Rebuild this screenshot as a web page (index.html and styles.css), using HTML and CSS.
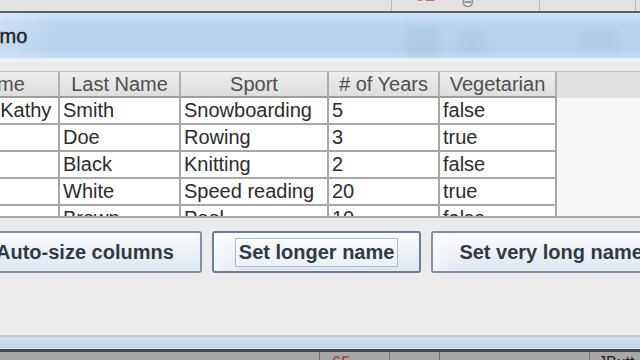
FILE: index.html
```html
<!DOCTYPE html>
<html lang="en">
<head>
    <meta charset="UTF-8">
    <meta name="viewport" content="width=device-width, initial-scale=1.0">
    <title>Table Column Demo</title>
    <link rel="stylesheet" href="styles.css">
</head>
<body>
    <!-- desktop strip above the window -->
    <div class="desk-top">
        <div class="desk-cell wide"></div>
        <div class="desk-cell mid">
            <span class="red-num">52</span>
            <span class="minus-glyph">&#8854;</span>
        </div>
        <div class="desk-cell small"></div>
        <div class="desk-cell rest"></div>
    </div>

    <div class="window">
        <div class="titlebar">
            <span class="title">Demo</span>
            <!-- blurred window controls -->
            <span class="ghost ghost-a"></span>
            <span class="ghost ghost-b"></span>
            <span class="ghost ghost-c"></span>
        </div>

        <div class="content">
            <div class="scroll-pane">
                <table class="grid">
                    <colgroup>
                        <col class="c-first">
                        <col class="c-last">
                        <col class="c-sport">
                        <col class="c-years">
                        <col class="c-veg">
                    </colgroup>
                    <thead>
                        <tr>
                            <th>First Name</th>
                            <th>Last Name</th>
                            <th>Sport</th>
                            <th># of Years</th>
                            <th>Vegetarian</th>
                        </tr>
                    </thead>
                    <tbody>
                        <tr><td>Katherine Kathy</td><td>Smith</td><td>Snowboarding</td><td>5</td><td>false</td></tr>
                        <tr><td>John</td><td>Doe</td><td>Rowing</td><td>3</td><td>true</td></tr>
                        <tr><td>Sue</td><td>Black</td><td>Knitting</td><td>2</td><td>false</td></tr>
                        <tr><td>Jane</td><td>White</td><td>Speed reading</td><td>20</td><td>true</td></tr>
                        <tr><td>Joe</td><td>Brown</td><td>Pool</td><td>10</td><td>false</td></tr>
                    </tbody>
                </table>
            </div>

            <div class="buttons">
                <button type="button" class="btn">Auto-size columns</button>
                <button type="button" class="btn btn-focus"><span class="focus-ring">Set longer name</span></button>
                <button type="button" class="btn">Set very long name</button>
            </div>
        </div>

        <div class="frame-bottom"></div>
    </div>

    <!-- desktop strip below the window -->
    <div class="desk-bottom">
        <div class="desk-cell b1"></div>
        <div class="desk-cell b2"><span class="red-num low">65</span></div>
        <div class="desk-cell b3"></div>
        <div class="desk-cell b4"></div>
        <div class="desk-cell b5"><span class="dark-text">JButt</span></div>
    </div>
</body>
</html>
```

FILE: styles.css
```css
body {
    margin: 0;
    width: 640px;
    height: 360px;
    overflow: hidden;
    background-color: #e4e4e4;
    font-family: "Liberation Sans", Arial, sans-serif;
}

/* desktop strips */
.desk-top {
    display: flex;
    height: 11px;
    overflow: hidden;
    background-color: #e3e3e3;
}
.desk-cell {
    height: 100%;
    overflow: hidden;
    box-sizing: border-box;
    border-right: 1px solid #b9b9b9;
    white-space: nowrap;
}
.desk-top .wide { width: 392px; }
.desk-top .mid { width: 148px; }
.desk-top .small { width: 96px; }
.desk-top .rest { flex: 1; border-right: none; }

.red-num {
    display: inline-block;
    margin-left: 23px;
    margin-top: -15px;
    font-size: 18px;
    line-height: 20px;
    font-weight: bold;
    color: #b0403a;
    opacity: 0.7;
    vertical-align: top;
}
.minus-glyph {
    display: inline-block;
    margin-left: 22px;
    margin-top: -7px;
    font-size: 16px;
    line-height: 18px;
    color: #8a8a8a;
    vertical-align: top;
}

/* window */
.window {
    border-bottom: 3px solid #4a4a4a;
}
.titlebar {
    position: relative;
    height: 45px;
    border-top: 2px solid #5a5f66;
    border-bottom: 2px solid #e4eef8;
    background:
        linear-gradient(to right, rgba(255, 255, 255, 0.22) 0, rgba(255, 255, 255, 0) 60px),
        linear-gradient(to bottom, #cfe3f7 0, #bcd6f1 20%, #b6d2ef 80%, #c4dbf2 100%);
    display: flex;
    align-items: center;
    overflow: hidden;
}
.title {
    margin-left: -26px;
    margin-top: 2px;
    font-size: 20px;
    color: #1c1f24;
    -webkit-text-stroke: 0.4px #1c1f24;
}
.ghost {
    position: absolute;
    filter: blur(4px);
    background-color: rgba(60, 85, 120, 0.08);
}
.ghost-a { left: 407px; top: 14px; width: 32px; height: 30px; }
.ghost-b { left: 458px; top: 16px; width: 28px; height: 24px; background-color: rgba(60, 85, 120, 0.06); }
.ghost-c { left: 582px; top: 16px; width: 34px; height: 20px; background-color: rgba(60, 85, 120, 0.07); }

.content {
    height: 275px;
    box-sizing: border-box;
    padding-top: 10px;
    background-color: #ececec;
    border-top: 1px solid #f6f6f6;
}

/* table in a scroll pane */
.scroll-pane {
    margin-left: -94px;
    height: 147px;
    box-sizing: border-box;
    overflow: hidden;
    border-top: 1px solid #bcbcbc;
    border-bottom: 2px solid #a9a9a9;
    background: linear-gradient(to bottom, #e1e1e1 0, #e1e1e1 26px, #f8f8f8 26px);
}
.grid {
    table-layout: fixed;
    width: 651px;
    border-collapse: separate;
    border-spacing: 0;
    font-size: 20px;
    background-color: #ffffff;
}
.c-first { width: 154px; }
.c-last { width: 121px; }
.c-sport { width: 148px; }
.c-years { width: 111px; }
.c-veg { width: 117px; }

.grid th {
    height: 24px;
    padding: 0 2px;
    font-weight: normal;
    line-height: 24px;
    color: #4f4f4f;
    text-align: center;
    white-space: nowrap;
    overflow: hidden;
    background: linear-gradient(to bottom, #ededed, #dedede);
    border-right: 2px solid #aeaeae;
    border-bottom: 2px solid #9d9d9d;
}
.grid th:first-child {
    padding-right: 14px;
}
.grid td {
    height: 25px;
    padding: 0 3px;
    line-height: 25px;
    color: #2c2c2c;
    white-space: nowrap;
    overflow: hidden;
    border-right: 2px solid #a7a7a7;
    border-bottom: 2px solid #a7a7a7;
}

/* buttons */
.buttons {
    display: flex;
    gap: 10px;
    margin-top: 13px;
    margin-left: -32px;
}
.btn {
    flex: none;
    height: 42px;
    padding: 0 26px;
    font-family: "Liberation Sans", Arial, sans-serif;
    font-size: 20px;
    font-weight: bold;
    color: #303a45;
    white-space: nowrap;
    border: 2px solid #7f91a4;
    border-radius: 3px;
    background:
        linear-gradient(to right, rgba(255, 255, 255, 0.55) 0, rgba(255, 255, 255, 0) 30px),
        linear-gradient(to bottom, #fbfcfe 0, #eef2f7 45%, #dfe6ee 100%);
    cursor: pointer;
}
.btn-focus {
    padding: 0 21px;
    border-color: #6b8098;
}
.focus-ring {
    display: inline-block;
    padding: 0 3px;
    line-height: 27px;
    border: 1px solid #a9bace;
    background-color: rgba(255, 255, 255, 0.35);
}

.frame-bottom {
    height: 11px;
    border-top: 2px solid #c6c9cd;
    border-bottom: 1px solid #dde9f5;
    background: linear-gradient(to bottom, #cfe1f3, #bcd5ef);
}

.desk-bottom {
    display: flex;
    height: 8px;
    overflow: hidden;
    background-color: #a6a6a6;
}
.desk-bottom .desk-cell { border-right: 1px solid #6f6f6f; }
.desk-bottom .b1 { width: 320px; }
.desk-bottom .b2 { width: 70px; }
.desk-bottom .b3 { width: 50px; }
.desk-bottom .b4 { width: 150px; }
.desk-bottom .b5 { flex: 1; border-right: none; }
.red-num.low {
    margin-left: 12px;
    margin-top: 1px;
    font-size: 16px;
    color: #a8302a;
}
.dark-text {
    display: inline-block;
    margin-left: 8px;
    margin-top: 1px;
    font-size: 16px;
    line-height: 20px;
    color: #222;
}
```
